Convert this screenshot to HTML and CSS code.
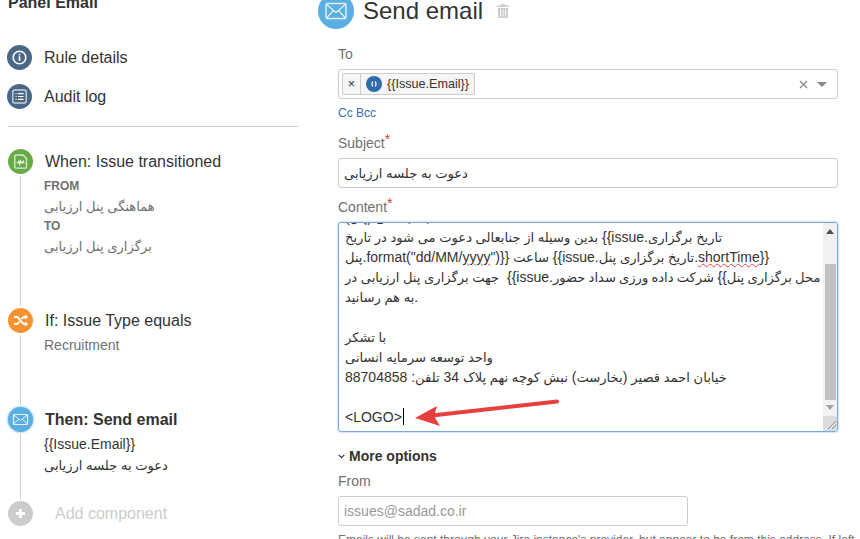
FILE: index.html
```html
<!DOCTYPE html>
<html lang="en">
<head>
  <meta charset="UTF-8" />
  <meta name="viewport" content="width=device-width, initial-scale=1.0"/>
  <title>Panel Email</title>
  <link rel="stylesheet" href="styles.css">
</head>
<body>
  <div class="page">
    <aside class="side">
      <h2 class="rule-name">Panel Email</h2>

      <div class="nav">
        <div class="nav-item">
          <span class="dot dot-navy">
            <svg viewBox="0 0 25 25" width="25" height="25"><circle cx="12.5" cy="12.5" r="6.300" fill="none" stroke="#fff" stroke-width="1.600"/><rect x="11.700" y="11.300" width="1.600" height="4.600" fill="#fff"/><rect x="11.700" y="8.800" width="1.600" height="1.600" fill="#fff"/></svg>
          </span>
          Rule details
        </div>
        <div class="nav-item">
          <span class="dot dot-navy">
            <svg viewBox="0 0 25 25" width="25" height="25"><rect x="5.800" y="6" width="13.400" height="13" rx="2" fill="none" stroke="#c9d3de" stroke-width="1.400"/><path d="M8.600 9.600h1M8.600 12.500h1M8.600 15.400h1M11 9.600h5.600M11 12.500h5.600M11 15.400h5.600" stroke="#fff" stroke-width="1.200"/></svg>
          </span>
          Audit log
        </div>
      </div>

      <hr class="divider">

      <div class="step step-when">
        <div class="rail">
          <span class="dot dot-green">
            <svg viewBox="0 0 25 25" width="25" height="25"><path d="M8 6h7l3.500 3.500V18a1.200 1.200 0 0 1-1.200 1.200H8A1.200 1.200 0 0 1 6.800 18V7.200A1.200 1.200 0 0 1 8 6z" fill="none" stroke="#dcecd3" stroke-width="1.300"/><path d="M8.500 13.700h1.600l.8-1.700.9 3.200.9-3.200.8 1.700h1.200l.5-1.300.5 1.300h.8" fill="none" stroke="#fff" stroke-width="1.100"/></svg>
          </span>
          <span class="line"></span>
        </div>
        <div class="step-body">
          <div class="step-title">When: Issue transitioned</div>
          <div class="meta-label">FROM</div>
          <div class="meta-value"><span class="fa">هماهنگی پنل ارزیابی</span></div>
          <div class="meta-label">TO</div>
          <div class="meta-value"><span class="fa">برگزاری پنل ارزیابی</span></div>
        </div>
      </div>

      <div class="step step-if">
        <div class="rail">
          <span class="dot dot-orange">
            <svg viewBox="0 0 25 25" width="25" height="25"><path d="M6 9h2.500c3.500 0 4.500 7 8 7H18M6 16h2.500c1.300 0 2.200-1 3-2.200M13.500 11c.8-1.100 1.700-2 3-2H18" fill="none" stroke="#fff" stroke-width="1.800"/><path d="M17 6.300l3 2.700-3 2.700zM17 13.300l3 2.700-3 2.700z" fill="#fff"/></svg>
          </span>
          <span class="line"></span>
        </div>
        <div class="step-body">
          <div class="step-title">If: Issue Type equals</div>
          <div class="meta-text">Recruitment</div>
        </div>
      </div>

      <div class="step step-then">
        <div class="rail">
          <span class="dot dot-blue dot-glow">
            <svg viewBox="0 0 25 25" width="25" height="25"><rect x="5.500" y="7.500" width="14" height="10" rx="1" fill="none" stroke="#e6f3fb" stroke-width="1.200"/><path d="M5.800 8l6.700 5.500L19.200 8M5.800 17l5-5M19.200 17l-5-5" fill="none" stroke="#e6f3fb" stroke-width="1"/></svg>
          </span>
          <span class="line"></span>
        </div>
        <div class="step-body">
          <div class="step-title step-title-on">Then: Send email</div>
          <div class="then-line">{{Issue.Email}}</div>
          <div class="then-line"><span class="fa">دعوت به جلسه ارزیابی</span></div>
        </div>
      </div>

      <div class="step step-add">
        <div class="rail">
          <span class="dot dot-grey">
            <svg viewBox="0 0 25 25" width="25" height="25"><path d="M12.500 8v9M8 12.500h9" stroke="#fff" stroke-width="2.800"/></svg>
          </span>
        </div>
        <div class="add-text">Add component</div>
      </div>
    </aside>

    <main class="main">
      <header class="head">
        <span class="head-icon">
          <svg viewBox="0 0 36 36" width="36" height="36"><rect x="8" y="10.500" width="20" height="15" rx="1.500" fill="none" stroke="#e6f3fb" stroke-width="1.400"/><path d="M8.500 11.500L18 19.500l9.500-8M8.500 25l7-7.500M27.500 25l-7-7.500" fill="none" stroke="#e6f3fb" stroke-width="1.200"/></svg>
        </span>
        <h1 class="head-title">Send email</h1>
        <svg class="trash" viewBox="0 0 12 14" width="12" height="14"><path d="M4 0h4l.6 1.500H12V3H0V1.500h3.400zM1 4h10v8.500A1.500 1.500 0 0 1 9.500 14h-7A1.500 1.500 0 0 1 1 12.500z" fill="#ccc"/><path d="M3.500 5.500v7M6 5.500v7M8.500 5.500v7" stroke="#fff" stroke-width=".9"/></svg>
      </header>

      <form class="form">
        <label class="field-label field-to">To</label>
        <div class="box select-box">
          <span class="chip">
            <span class="chip-x">×</span>
            <span class="chip-main">
              <span class="chip-icon">
                <svg viewBox="0 0 16 16" width="16" height="16"><path d="M6.800 5.500c-1 1.500-1 3.500 0 5M9.200 5.500c1 1.500 1 3.500 0 5" fill="none" stroke="#fff" stroke-width="1.200"/></svg>
              </span>
              {{Issue.Email}}
            </span>
          </span>
          <span class="select-clear">
            <svg viewBox="0 0 9 9" width="9" height="9"><path d="M1 1l7 7M8 1L1 8" stroke="#888" stroke-width="1.200"/></svg>
          </span>
          <span class="select-arrow"></span>
        </div>
        <div class="cc-links"><a class="link">Cc</a> <a class="link">Bcc</a></div>

        <label class="field-label field-subject">Subject<sup class="req">*</sup></label>
        <div class="box text-box"><span class="fa">دعوت به جلسه ارزیابی</span></div>

        <label class="field-label field-content">Content<sup class="req">*</sup></label>
        <div class="editor">
          <div class="editor-text"><span class="fa">جناب آقای</span> (<span class="fa">پنل</span>)
<span class="fa">بدین وسیله از جنابعالی دعوت می شود در تاریخ</span> {{issue.<span class="fa">تاریخ برگزاری</span>
<span class="fa">پنل</span>.format("dd/MM/<span class="typo">yyyy</span>")}} <span class="fa">ساعت</span> {{issue.<span class="fa">تاریخ برگزاری پنل</span>.<span class="typo">shortTime</span>}}
<span class="fa">جهت برگزاری پنل ارزیابی در</span>  {{issue.<span class="rtl-run"><span class="fa">محل برگزاری پنل</span>}} <span class="fa">شرکت داده ورزی سداد حضور</span></span>
<span class="fa">به هم رسانید</span>.

<span class="fa">با تشکر</span>
<span class="fa">واحد توسعه سرمایه انسانی</span>
<span class="fa">خیابان احمد قصیر</span> (<span class="fa">بخارست</span>) <span class="fa">نبش کوچه نهم پلاک</span> 34 <span class="fa">تلفن</span>: 88704858

&lt;LOGO&gt;<span class="caret"></span></div>
          <div class="scrollbar">
            <span class="scroll-up"></span>
            <span class="scroll-thumb"></span>
            <span class="scroll-down"></span>
            <span class="scroll-corner">
              <svg viewBox="0 0 14 14" width="14" height="14"><path d="M5 13L13 5M9 13l4-4" stroke="#888" stroke-width="1"/></svg>
            </span>
          </div>
        </div>

        <div class="more"><svg class="more-chev" viewBox="0 0 7 5" width="7" height="5"><path d="M.7 .8L3.500 3.600 6.300 .8" fill="none" stroke="#333" stroke-width="1.200"/></svg>More options</div>
        <label class="field-label field-from">From</label>
        <div class="box text-box from-box">issues@sadad.co.ir</div>
        <p class="help">Emails will be sent through your Jira instance's provider, but appear to be from this address. If left</p>
      </form>
    </main>
  </div>

  <!-- red arrow pasted on the screenshot -->
  <svg class="markup" viewBox="0 0 860 539" width="860" height="539">
    <path d="M557 401.500L432 415.500" stroke="#e5403f" stroke-width="4" stroke-linecap="round"/>
    <path d="M415 418L437 406L434 416L440 426Z" fill="#e5403f"/>
  </svg>
</body>
</html>
```

FILE: styles.css
```css
* {
  margin: 0;
  padding: 0;
  box-sizing: border-box;
}

html, body {
  height: 539px;
  overflow: hidden;
}

body {
  background-color: #fff;
  color: #333;
  font-family: 'Liberation Sans', 'DejaVu Sans', sans-serif;
  font-size: 14px;
}

/* persian text runs a bit smaller than the latin around it */
.fa {
  font-size: 13.1px;
  line-height: 1;
}

.rtl-run {
  direction: rtl;
  unicode-bidi: isolate;
  word-spacing: -0.5px;
}

.page {
  display: flex;
  margin-top: -7px;
}

/* left column */
.side {
  width: 290px;
  margin-left: 8px;
  flex-shrink: 0;
}

.rule-name {
  font-size: 16px;
  line-height: 20px;
  margin-bottom: 32px;
}

.nav {
  margin-left: -1px;
}

.nav-item {
  display: flex;
  align-items: center;
  gap: 12px;
  height: 25px;
  margin-bottom: 14px;
  font-size: 16px;
}

.dot {
  display: block;
  width: 25px;
  height: 25px;
  border-radius: 50%;
  flex-shrink: 0;
}

.dot svg {
  display: block;
}

.dot-navy { background-color: #4a6785; }
.dot-green { background-color: #67ab49; }
.dot-orange { background-color: #f79232; }
.dot-blue { background-color: #59afe1; }
.dot-grey { background-color: #ccc; }

.dot-glow {
  box-shadow: 0 0 3px #59afe1;
}

.divider {
  border: 0;
  border-top: 1px solid #ccc;
  margin: 17px 0 22px;
}

.step {
  display: flex;
  gap: 12px;
}

.step-when { height: 159px; }
.step-if { height: 99px; }
.step-then { height: 94px; }

.rail {
  display: flex;
  flex-direction: column;
  align-items: center;
  width: 25px;
}

.line {
  flex: 1;
  width: 1px;
  margin: 2px 0;
  background-color: #ccc;
}

.step-title {
  font-size: 16px;
  line-height: 25px;
}

.step-title-on {
  font-weight: bold;
}

.meta-label {
  margin-left: -1px;
  font-size: 12px;
  font-weight: bold;
  line-height: 18px;
  color: #707070;
}

.step-title + .meta-label {
  margin-top: 3px;
}

.meta-value {
  margin-left: -1px;
  line-height: 22px;
  color: #707070;
}

.meta-text {
  margin-left: -1px;
  margin-top: 2px;
  line-height: 20px;
  color: #707070;
}

.then-line {
  margin-left: -1px;
  line-height: 21px;
}

.step-title + .then-line {
  margin-top: 2px;
}

.add-text {
  margin-left: 10px;
  font-size: 16px;
  line-height: 25px;
  color: #ccc;
}

/* right column */
.main {
  margin-left: 20px;
  width: 522px;
}

.head {
  display: flex;
  align-items: center;
  height: 36px;
}

.head-icon {
  display: block;
  width: 36px;
  height: 36px;
  border-radius: 50%;
  background-color: #59afe1;
}

.head-icon svg {
  display: block;
}

.head-title {
  margin-left: 9px;
  font-size: 24px;
  font-weight: normal;
  line-height: 36px;
}

.trash {
  margin-left: 14px;
}

.form {
  margin-left: 20px;
  width: 500px;
}

.field-label {
  display: block;
  line-height: 20px;
  margin-bottom: 5px;
  color: #707070;
}

.field-to { margin-top: 15px; }
.field-subject { margin-top: 12px; }
.field-content { margin-top: 9px; }
.field-from { margin-top: 5px; }

.req {
  color: #d04437;
  font-size: 14px;
  line-height: 0;
  vertical-align: 4px;
}

.box {
  height: 30px;
  border: 1px solid #ccc;
  border-radius: 3px;
  background-color: #fff;
}

.select-box {
  display: flex;
  align-items: center;
  padding-left: 3px;
}

.chip {
  display: flex;
  height: 22px;
  border: 1px solid #ccc;
  border-radius: 2px;
  background-color: #f5f5f5;
  font-size: 12.6px;
  line-height: 20px;
}

.chip-x {
  width: 18px;
  border-right: 1px solid #ccc;
  text-align: center;
}

.chip-main {
  display: flex;
  align-items: center;
  gap: 5px;
  padding: 0 5px;
}

.chip-icon {
  display: block;
  width: 16px;
  height: 16px;
  border-radius: 50%;
  background-color: #2e6cac;
}

.chip-icon svg {
  display: block;
}

.select-clear {
  margin-left: auto;
  display: flex;
}

.select-arrow {
  margin: 0 10px 0 9px;
  border-left: 5px solid transparent;
  border-right: 5px solid transparent;
  border-top: 5px solid #888;
}

.cc-links {
  margin-top: 6px;
  font-size: 12px;
  line-height: 16px;
}

.link {
  color: #3572b0;
}

.text-box {
  padding: 0 5px;
  line-height: 28px;
}

.editor {
  position: relative;
  height: 210px;
  border: 1px solid #7ba6dd;
  border-radius: 3px;
  box-shadow: 0 0 2px #7ba6dd;
  overflow: hidden;
  display: flex;
}

.editor-text {
  flex: 1;
  margin-top: -16px;
  padding: 0 5px 0 6px;
  line-height: 20px;
  white-space: pre;
  direction: ltr;
  overflow: hidden;
}

.typo {
  text-decoration: underline wavy #e5403f 1px;
}

.caret {
  display: inline-block;
  width: 1px;
  height: 17px;
  margin-left: 1px;
  vertical-align: -3px;
  background-color: #000;
}

.scrollbar {
  display: flex;
  flex-direction: column;
  align-items: center;
  width: 14px;
  flex-shrink: 0;
  background-color: #f1f1f1;
}

.scroll-up {
  margin-top: 6px;
  border-left: 4px solid transparent;
  border-right: 4px solid transparent;
  border-bottom: 5px solid #505050;
}

.scroll-thumb {
  width: 11px;
  height: 136px;
  margin-top: 30px;
  background-color: #c1c1c1;
}

.scroll-down {
  margin-top: 5px;
  border-left: 4px solid transparent;
  border-right: 4px solid transparent;
  border-top: 5px solid #a3a3a3;
}

.scroll-corner {
  display: block;
  width: 14px;
  height: 15px;
  margin-top: auto;
  background-color: #dcdcdc;
}

.scroll-corner svg {
  display: block;
}

.more {
  display: flex;
  align-items: center;
  gap: 4px;
  margin-top: 14px;
  font-weight: bold;
  line-height: 20px;
}

.from-box {
  width: 350px;
  color: #999;
}

.help {
  margin-top: 6px;
  width: 540px;
  font-size: 12px;
  line-height: 16px;
  color: #707070;
  white-space: nowrap;
}

.markup {
  position: absolute;
  left: 0;
  top: 0;
  pointer-events: none;
}
```
